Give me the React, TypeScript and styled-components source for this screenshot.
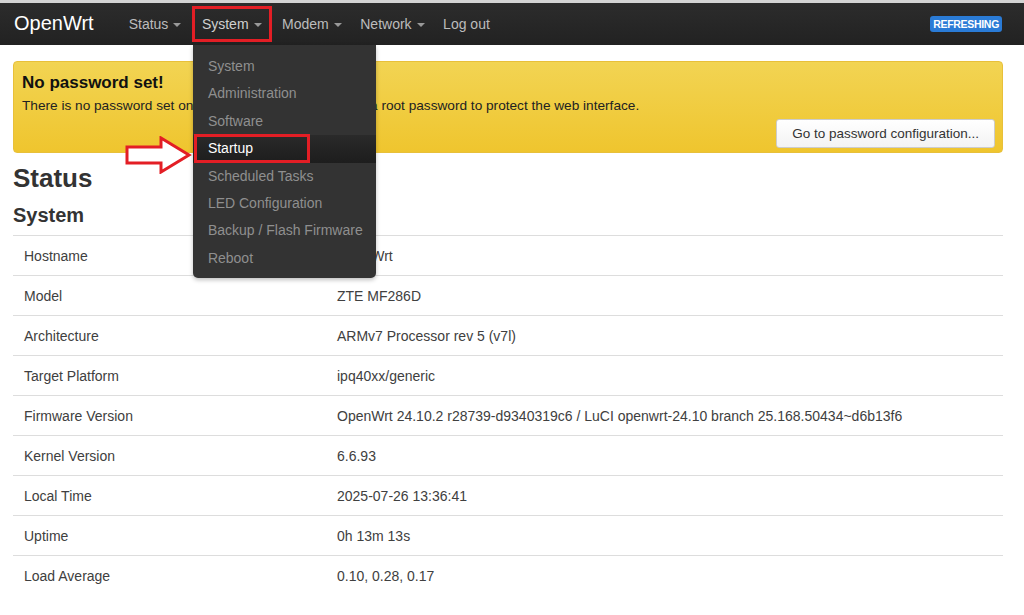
import React from 'react';
import styled, { createGlobalStyle } from 'styled-components';

const GlobalStyle = createGlobalStyle`
  html, body {
    margin: 0;
    padding: 0;
    background: #fff;
    font-family: "Liberation Sans", Arial, sans-serif;
    color: #404040;
  }
  * { box-sizing: border-box; }
`;

const Page = styled.div`
  width: 1024px;
  height: 615px;
  overflow: hidden;
  border-top: 3px solid #d4d4d4;
`;

const Navbar = styled.div`
  height: 42px;
  background: linear-gradient(#2c2c2c, #222);
  display: flex;
  align-items: center;
  padding: 0 22px 0 14px;
`;

const Brand = styled.div`
  color: #fff;
  font-size: 20px;
  margin-right: 27px;
  margin-top: -1px;
`;

const NavMenu = styled.div`
  display: flex;
  align-items: center;
  flex: 1;
`;

const NavItem = styled.div<{ $marked?: boolean }>`
  position: relative;
  height: 36px;
  display: flex;
  align-items: center;
  padding: 0 8px;
  margin-right: 2.5px;
  color: #bcbcbc;
  font-size: 14px;
  outline: ${(p) => (p.$marked ? '3px solid #e31e25' : 'none')};
  outline-offset: -3px;
  ${(p) => p.$marked && 'padding: 0 10px; color: #d0d0d0;'}
`;

const Caret = styled.span`
  display: inline-block;
  width: 0;
  height: 0;
  margin-left: 5px;
  margin-top: 2px;
  border-left: 4px solid transparent;
  border-right: 4px solid transparent;
  border-top: 4px solid #999;
`;

const Badge = styled.span`
  background: #2a7bd6;
  color: #fff;
  font-weight: bold;
  font-size: 10.5px;
  padding: 2px 3px;
  border-radius: 3px;
  letter-spacing: -0.3px;
`;

const Dropdown = styled.div`
  position: absolute;
  top: 39px;
  left: 1px;
  width: 183px;
  background: #333;
  border-radius: 0 0 5px 5px;
  padding: 8px 0 6px;
  box-shadow: 0 2px 4px rgba(0, 0, 0, 0.25);
  z-index: 5;
`;

const DropItem = styled.div<{ $active?: boolean }>`
  position: relative;
  height: 27.4px;
  line-height: 27.4px;
  padding-left: 15px;
  font-size: 14px;
  color: ${(p) => (p.$active ? '#fff' : '#8f8f8f')};
  background: ${(p) => (p.$active ? 'linear-gradient(#2a2a2a, #1d1d1d)' : 'transparent')};
  white-space: nowrap;
`;

const Marker = styled.div`
  position: absolute;
  left: 1px;
  top: -1px;
  width: 116px;
  height: 29px;
  border: 3px solid #e31e25;
`;

const Arrow = styled.svg`
  position: absolute;
  left: -68px;
  top: 1px;
`;

const Main = styled.div`
  padding: 0 21px 0 13px;
`;

const Alert = styled.div`
  margin-top: 16px;
  background: linear-gradient(#f2d453, #efc52e);
  border: 1px solid #e8c03a;
  border-radius: 4px;
  padding: 11px 7px 4px 8px;
  color: #222;
`;

const AlertTitle = styled.div`
  font-size: 17px;
  font-weight: bold;
  color: #111;
`;

const AlertText = styled.div`
  font-size: 13.65px;
  margin-top: 5px;
`;

const AlertActions = styled.div`
  display: flex;
  justify-content: flex-end;
  margin-top: 6px;
`;

const Button = styled.div`
  background: linear-gradient(#fff, #f3f3f3);
  border: 1px solid #ccc;
  border-radius: 3px;
  padding: 0 15px;
  height: 29px;
  line-height: 27px;
  font-size: 13.5px;
  color: #333;
`;

const H2 = styled.h2`
  margin: 10px 0 0;
  font-size: 26px;
  font-weight: bold;
  color: #333;
`;

const H3 = styled.h3`
  margin: 10px 0 0;
  font-size: 20px;
  font-weight: bold;
  color: #333;
`;

const Table = styled.div`
  margin-top: 8px;
`;

const Row = styled.div`
  display: grid;
  grid-template-columns: 313px 1fr;
  height: 40px;
  align-items: center;
  border-top: 1px solid #ddd;
  font-size: 14px;
  color: #404040;
  padding-left: 11px;
`;

const rows: [string, string][] = [
  ['Hostname', 'OpenWrt'],
  ['Model', 'ZTE MF286D'],
  ['Architecture', 'ARMv7 Processor rev 5 (v7l)'],
  ['Target Platform', 'ipq40xx/generic'],
  ['Firmware Version', 'OpenWrt 24.10.2 r28739-d9340319c6 / LuCI openwrt-24.10 branch 25.168.50434~d6b13f6'],
  ['Kernel Version', '6.6.93'],
  ['Local Time', '2025-07-26 13:36:41'],
  ['Uptime', '0h 13m 13s'],
  ['Load Average', '0.10, 0.28, 0.17'],
];

const systemMenu = [
  'System',
  'Administration',
  'Software',
  'Startup',
  'Scheduled Tasks',
  'LED Configuration',
  'Backup / Flash Firmware',
  'Reboot',
];

export default function App() {
  return (
    <Page>
      <GlobalStyle />
      <Navbar>
        <Brand>OpenWrt</Brand>
        <NavMenu>
          <NavItem>Status<Caret /></NavItem>
          <NavItem $marked>
            System<Caret />
            <Dropdown>
              {systemMenu.map((m) => (
                <DropItem key={m} $active={m === 'Startup'}>
                  {m}
                  {m === 'Startup' && (
                    <>
                      <Marker />
                      <Arrow width="68" height="38" viewBox="0 0 68 38">
                        <path
                          d="M2 11 H36 V2 L64 19 L36 36 V27 H2 Z"
                          fill="#fff"
                          stroke="#e31e25"
                          strokeWidth="3"
                          strokeLinejoin="miter"
                        />
                      </Arrow>
                    </>
                  )}
                </DropItem>
              ))}
            </Dropdown>
          </NavItem>
          <NavItem>Modem<Caret /></NavItem>
          <NavItem>Network<Caret /></NavItem>
          <NavItem>Log out</NavItem>
        </NavMenu>
        <Badge>REFRESHING</Badge>
      </Navbar>
      <Main>
        <Alert>
          <AlertTitle>No password set!</AlertTitle>
          <AlertText>
            There is no password set on this router. Please configure a root password to protect the web interface.
          </AlertText>
          <AlertActions>
            <Button>Go to password configuration...</Button>
          </AlertActions>
        </Alert>
        <H2>Status</H2>
        <H3>System</H3>
        <Table>
          {rows.map(([k, v]) => (
            <Row key={k}>
              <span>{k}</span>
              <span>{v}</span>
            </Row>
          ))}
        </Table>
      </Main>
    </Page>
  );
}
